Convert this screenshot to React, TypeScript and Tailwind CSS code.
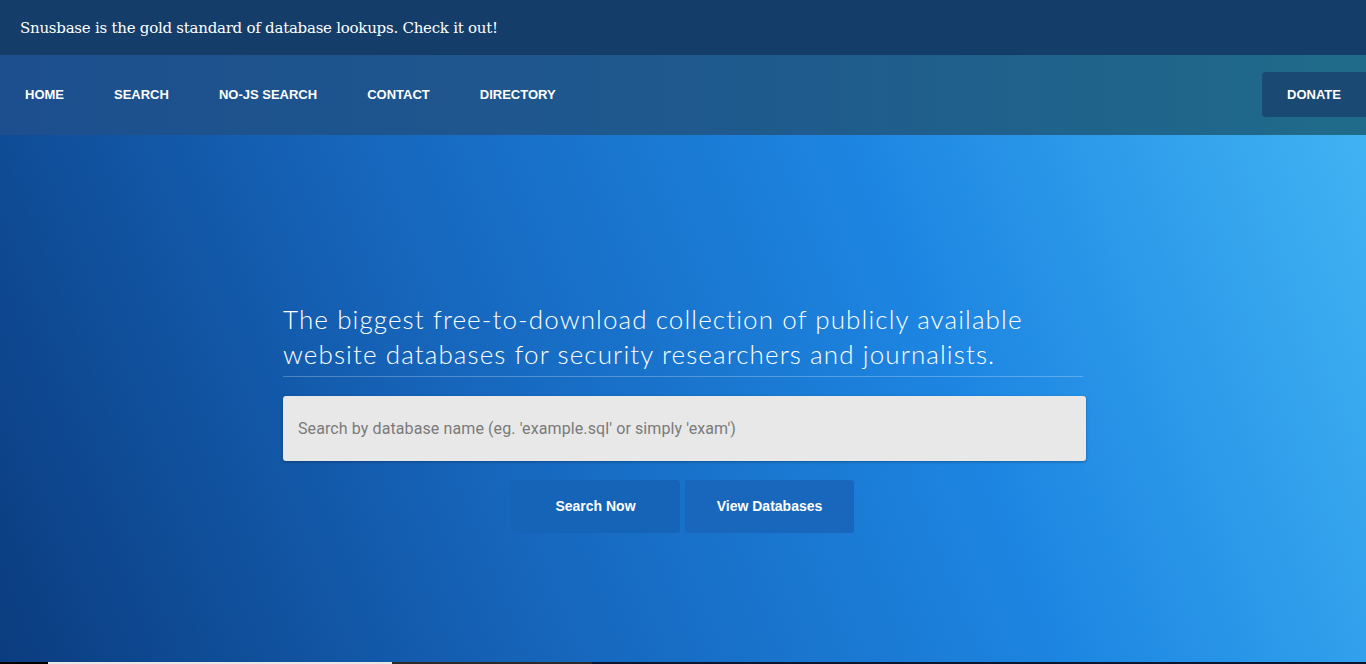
export default function App() {
  const navItems = ['HOME', 'SEARCH', 'NO-JS SEARCH', 'CONTACT', 'DIRECTORY'];

  return (
    <div className="w-full h-[664px] overflow-hidden flex flex-col bg-black">
      {/* Top banner */}
      <div className="h-[55px] shrink-0 bg-[#143d6a] flex items-center px-5 pt-[1px]">
        <p className="text-white text-[15px] font-['DejaVu_Serif',serif] tracking-[-0.25px]">
          Snusbase is the gold standard of database lookups. Check it out!
        </p>
      </div>

      {/* Nav */}
      <nav className="h-[80px] shrink-0 flex items-center justify-between bg-[linear-gradient(90deg,#1d4f8e_0%,#1f5a8d_55%,#206b8a_100%)] font-['Liberation_Sans',Arial,sans-serif]">
        <ul className="flex items-center">
          {navItems.map((item) => (
            <li key={item} className="px-[25px] text-white text-[13px] font-bold">
              {item}
            </li>
          ))}
        </ul>
        <button className="h-[45px] w-[104px] bg-[#1a4a73] rounded-l-[4px] text-white text-[13px] font-bold mb-[1px]">
          DONATE
        </button>
      </nav>

      {/* Hero */}
      <main className="h-[527px] shrink-0 bg-[linear-gradient(68deg,#0b3c7f_0%,#1665bb_35%,#1d86e2_68%,#41b3f3_100%)]">
        <div className="w-[800px] mx-auto pt-[167px]">
          <h1 className="text-white text-[26px] leading-[35px] font-['Lato',sans-serif] font-light tracking-[1.1px] pb-1 border-b border-white/25">
            The biggest free-to-download collection of publicly available
            <br />
            website databases for security researchers and journalists.
          </h1>
          <div className="mt-[19px] w-[803px] h-[65px] bg-[#e8e8e8] rounded-[3px] shadow-[0_1px_3px_rgba(0,0,0,0.3)] flex items-center px-[15px]">
            <span className="text-[#7a7a7a] text-[16px] tracking-[0.1px] font-['Roboto',Arial,sans-serif]">
              Search by database name (eg. 'example.sql' or simply 'exam')
            </span>
          </div>
          <div className="mt-[19px] flex justify-center gap-[5px] pr-[1px] font-['Liberation_Sans',Arial,sans-serif]">
            <button className="w-[169px] h-[53px] bg-[#1664b8] rounded-[3px] text-white text-[14px] font-bold">
              Search Now
            </button>
            <button className="w-[169px] h-[53px] bg-[#1867bc] rounded-[3px] text-white text-[14px] font-bold">
              View Databases
            </button>
          </div>
        </div>
      </main>

      {/* Bottom strip of next section */}
      <div className="h-[2px] flex">
        <div className="w-[48px] bg-black" />
        <div className="w-[344px] bg-[#e8e8e8]" />
        <div className="w-[200px] bg-[#2a2a2a]" />
        <div className="flex-1 bg-[#0a1630]" />
      </div>
    </div>
  );
}
